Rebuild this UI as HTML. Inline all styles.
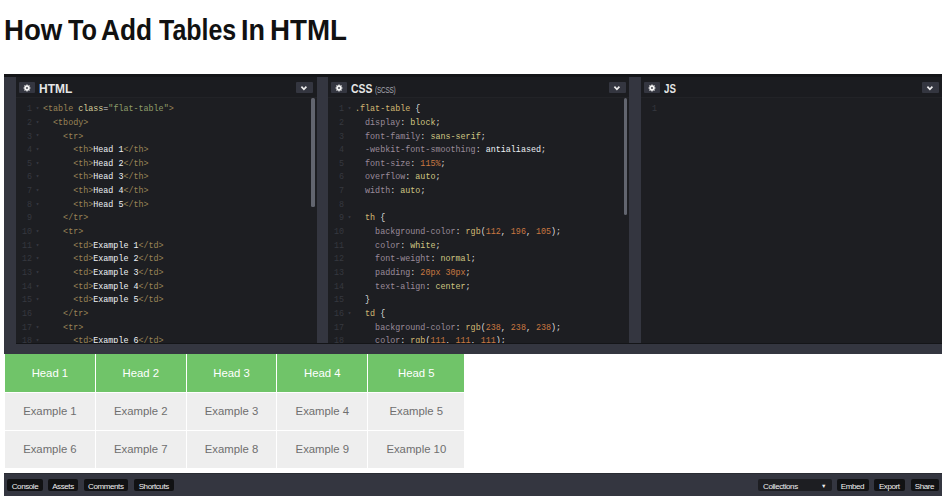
<!DOCTYPE html>
<html><head><meta charset="utf-8">
<style>
*{box-sizing:border-box;margin:0;padding:0}
html,body{width:945px;height:503px;overflow:hidden;background:#fff}
body{position:relative;font-family:"Liberation Sans",sans-serif}
h1{position:absolute;left:0;top:13px;width:400px;height:34px;font-size:29px;font-weight:bold;color:#111;white-space:nowrap;line-height:34px}h1 span{position:absolute;top:0;transform-origin:0 0}
#embed{position:absolute;left:4px;top:74px;width:938px;height:422px;background:#fff}
#topstrip{position:absolute;left:0;top:0;width:938px;height:3px;background:#141518}
.gut{position:absolute;top:3px;height:267px;background:#343640}
.panel{position:absolute;top:3px;height:266px;background:#1d1e22;overflow:hidden}
.ph{position:absolute;left:0;top:0;right:0;height:20.6px;background:#1b1c20;border-bottom:1px solid #222327}
.gear{position:absolute;left:3.4px;top:4.6px;width:15.8px;height:11.6px;background:#343640;border-radius:1px}
.gear svg{position:absolute;left:4.1px;top:2.35px}
.title{position:absolute;left:22.5px;top:5px;color:#e6e6e6;font-weight:bold;font-size:13px;line-height:14px;transform:scaleX(0.92);transform-origin:0 0}
.sub{position:absolute;left:46.8px;top:7.5px;font-size:8.8px;line-height:10px;color:#a8a8b0;letter-spacing:-0.3px;transform:scaleX(0.73);transform-origin:0 0}
.chev{position:absolute;top:4.5px;width:17px;height:11.7px;background:#343640;border-radius:1px}
.chev svg{position:absolute;left:0;top:0}
.code{position:absolute;left:0;top:26.2px;right:0;font-family:"Liberation Mono",monospace;font-size:8.4px;line-height:13.66px;white-space:pre;color:#ddd}
.ln{display:inline-block;width:16px;text-align:right;color:#36383f}
.fd{display:inline-block;width:11px;text-align:center;color:#3a3c45;font-size:6px;position:relative;top:-1.2px}
.t{color:#9a8457}.a{color:#d6cf9a}.s{color:#8f9d6a}.w{color:#eef2f6}
.sel{color:#d2b873}.p{color:#9a8b9a}.k{color:#d0c683}.n{color:#ca7841}
.sb{position:absolute;width:3.2px;background:#62656f;border-radius:1.5px}
#resizer{position:absolute;left:0;top:270px;width:938px;height:10px;background:#343640}
#edgeline{position:absolute;left:12px;top:269px;width:926px;height:1px;background:#141518}
#result{position:absolute;left:0;top:280px;width:938px;height:118px;background:#fff}
table{position:absolute;left:1px;top:0;border-collapse:collapse;font-size:11.33px;font-family:"Liberation Sans",sans-serif}
th,td{border:1px solid #fff;text-align:center;height:38px;padding:0 18.15px;font-weight:normal}
th{background:#70c469;color:#fff}
td{background:#eee;color:#6f6f6f}
tr:first-child th{border-top:none}
th:first-child,td:first-child{border-left:none}
#toolbar{position:absolute;left:0;top:398.6px;width:938px;height:23.2px;background:#343640;border-top:1px solid #2a2c33}
.btn{position:absolute;top:5.9px;height:11.6px;background:#111214;border-radius:2px;color:#f0f0f0;font-size:8px;line-height:15.4px;text-align:center;letter-spacing:-0.4px}
</style></head><body>
<h1><span style="left:4.0px;transform:scaleX(0.953)">How</span><span style="left:67.6px;transform:scaleX(0.875)">To</span><span style="left:101.4px;transform:scaleX(0.907)">Add</span><span style="left:158.6px;transform:scaleX(0.861)">Tables</span><span style="left:241.2px;transform:scaleX(0.930)">In</span><span style="left:270.3px;transform:scaleX(0.956)">HTML</span></h1>
<div id="embed">
 <div id="topstrip"></div>
 <div class="gut" style="left:0;width:12px"></div>
 <div class="panel" style="left:12px;width:301px">
  <div class="ph">
   <div class="gear"><svg width="8" height="8" viewBox="0 0 8 8"><path fill="#f4f4f4" fill-rule="evenodd" d="M6.68 3.40 L7.50 3.43 L7.50 4.57 L6.68 4.60 L6.32 5.47 L6.88 6.08 L6.08 6.88 L5.47 6.32 L4.60 6.68 L4.57 7.50 L3.43 7.50 L3.40 6.68 L2.53 6.32 L1.92 6.88 L1.12 6.08 L1.68 5.47 L1.32 4.60 L0.50 4.57 L0.50 3.43 L1.32 3.40 L1.68 2.53 L1.12 1.92 L1.92 1.12 L2.53 1.68 L3.40 1.32 L3.43 0.50 L4.57 0.50 L4.60 1.32 L5.47 1.68 L6.08 1.12 L6.88 1.92 L6.32 2.53Z M4 3.1 A0.9 0.9 0 1 0 4 4.9 A0.9 0.9 0 1 0 4 3.1Z"/></svg></div>
   <div class="title">HTML</div>
   <div class="chev" style="left:280px"><svg width="17" height="12" viewBox="0 0 17 12"><path d="M5.4 4.7 L7.9 7.3 L10.4 4.7" fill="none" stroke="#eee" stroke-width="1.7"/></svg></div>
  </div>
  <div class="code" id="htmlcode"><span class="ln">1</span><span class="fd">&#9662;</span><span class="t">&lt;table</span> <span class="a">class</span>=<span class="s">"flat-table"</span><span class="t">&gt;</span>
<span class="ln">2</span><span class="fd">&#9662;</span>  <span class="t">&lt;tbody&gt;</span>
<span class="ln">3</span><span class="fd">&#9662;</span>    <span class="t">&lt;tr&gt;</span>
<span class="ln">4</span><span class="fd">&#9662;</span>      <span class="t">&lt;th&gt;</span><span class="w">Head 1</span><span class="t">&lt;/th&gt;</span>
<span class="ln">5</span><span class="fd">&#9662;</span>      <span class="t">&lt;th&gt;</span><span class="w">Head 2</span><span class="t">&lt;/th&gt;</span>
<span class="ln">6</span><span class="fd">&#9662;</span>      <span class="t">&lt;th&gt;</span><span class="w">Head 3</span><span class="t">&lt;/th&gt;</span>
<span class="ln">7</span><span class="fd">&#9662;</span>      <span class="t">&lt;th&gt;</span><span class="w">Head 4</span><span class="t">&lt;/th&gt;</span>
<span class="ln">8</span><span class="fd">&#9662;</span>      <span class="t">&lt;th&gt;</span><span class="w">Head 5</span><span class="t">&lt;/th&gt;</span>
<span class="ln">9</span><span class="fd"></span>    <span class="t">&lt;/tr&gt;</span>
<span class="ln">10</span><span class="fd">&#9662;</span>    <span class="t">&lt;tr&gt;</span>
<span class="ln">11</span><span class="fd">&#9662;</span>      <span class="t">&lt;td&gt;</span><span class="w">Example 1</span><span class="t">&lt;/td&gt;</span>
<span class="ln">12</span><span class="fd">&#9662;</span>      <span class="t">&lt;td&gt;</span><span class="w">Example 2</span><span class="t">&lt;/td&gt;</span>
<span class="ln">13</span><span class="fd">&#9662;</span>      <span class="t">&lt;td&gt;</span><span class="w">Example 3</span><span class="t">&lt;/td&gt;</span>
<span class="ln">14</span><span class="fd">&#9662;</span>      <span class="t">&lt;td&gt;</span><span class="w">Example 4</span><span class="t">&lt;/td&gt;</span>
<span class="ln">15</span><span class="fd">&#9662;</span>      <span class="t">&lt;td&gt;</span><span class="w">Example 5</span><span class="t">&lt;/td&gt;</span>
<span class="ln">16</span><span class="fd"></span>    <span class="t">&lt;/tr&gt;</span>
<span class="ln">17</span><span class="fd">&#9662;</span>    <span class="t">&lt;tr&gt;</span>
<span class="ln">18</span><span class="fd">&#9662;</span>      <span class="t">&lt;td&gt;</span><span class="w">Example 6</span><span class="t">&lt;/td&gt;</span></div>
  <div class="sb" style="left:295.4px;top:21.4px;height:108.6px"></div>
 </div>
 <div class="gut" style="left:313px;width:11px"></div>
 <div class="panel" style="left:324px;width:301px">
  <div class="ph">
   <div class="gear"><svg width="8" height="8" viewBox="0 0 8 8"><path fill="#f4f4f4" fill-rule="evenodd" d="M6.68 3.40 L7.50 3.43 L7.50 4.57 L6.68 4.60 L6.32 5.47 L6.88 6.08 L6.08 6.88 L5.47 6.32 L4.60 6.68 L4.57 7.50 L3.43 7.50 L3.40 6.68 L2.53 6.32 L1.92 6.88 L1.12 6.08 L1.68 5.47 L1.32 4.60 L0.50 4.57 L0.50 3.43 L1.32 3.40 L1.68 2.53 L1.12 1.92 L1.92 1.12 L2.53 1.68 L3.40 1.32 L3.43 0.50 L4.57 0.50 L4.60 1.32 L5.47 1.68 L6.08 1.12 L6.88 1.92 L6.32 2.53Z M4 3.1 A0.9 0.9 0 1 0 4 4.9 A0.9 0.9 0 1 0 4 3.1Z"/></svg></div>
   <div class="title" style="transform:scaleX(0.80)">CSS</div><div class="sub">(SCSS)</div>
   <div class="chev" style="left:281px"><svg width="17" height="12" viewBox="0 0 17 12"><path d="M5.4 4.7 L7.9 7.3 L10.4 4.7" fill="none" stroke="#eee" stroke-width="1.7"/></svg></div>
  </div>
  <div class="code" id="csscode"><span class="ln">1</span><span class="fd">&#9662;</span><span class="sel">.flat-table</span> {
<span class="ln">2</span><span class="fd"></span>  <span class="p">display</span>: <span class="k">block</span>;
<span class="ln">3</span><span class="fd"></span>  <span class="p">font-family</span>: <span class="k">sans-serif</span>;
<span class="ln">4</span><span class="fd"></span>  <span class="p">-webkit-font-smoothing</span>: <span class="w">antialiased</span>;
<span class="ln">5</span><span class="fd"></span>  <span class="p">font-size</span>: <span class="n">115%</span>;
<span class="ln">6</span><span class="fd"></span>  <span class="p">overflow</span>: <span class="k">auto</span>;
<span class="ln">7</span><span class="fd"></span>  <span class="p">width</span>: <span class="k">auto</span>;
<span class="ln">8</span><span class="fd"></span>
<span class="ln">9</span><span class="fd">&#9662;</span>  <span class="sel">th</span> {
<span class="ln">10</span><span class="fd"></span>    <span class="p">background-color</span>: <span class="sel">rgb</span>(<span class="n">112</span>, <span class="n">196</span>, <span class="n">105</span>);
<span class="ln">11</span><span class="fd"></span>    <span class="p">color</span>: <span class="k">white</span>;
<span class="ln">12</span><span class="fd"></span>    <span class="p">font-weight</span>: <span class="k">normal</span>;
<span class="ln">13</span><span class="fd"></span>    <span class="p">padding</span>: <span class="n">20px</span> <span class="n">30px</span>;
<span class="ln">14</span><span class="fd"></span>    <span class="p">text-align</span>: <span class="k">center</span>;
<span class="ln">15</span><span class="fd"></span>  }
<span class="ln">16</span><span class="fd">&#9662;</span>  <span class="sel">td</span> {
<span class="ln">17</span><span class="fd"></span>    <span class="p">background-color</span>: <span class="sel">rgb</span>(<span class="n">238</span>, <span class="n">238</span>, <span class="n">238</span>);
<span class="ln">18</span><span class="fd"></span>    <span class="p">color</span>: <span class="sel">rgb</span>(<span class="n">111</span>, <span class="n">111</span>, <span class="n">111</span>);</div>
  <div class="sb" style="left:295.8px;top:21.4px;height:117px"></div>
 </div>
 <div class="gut" style="left:625px;width:12px"></div>
 <div class="panel" style="left:637px;width:301px">
  <div class="ph">
   <div class="gear"><svg width="8" height="8" viewBox="0 0 8 8"><path fill="#f4f4f4" fill-rule="evenodd" d="M6.68 3.40 L7.50 3.43 L7.50 4.57 L6.68 4.60 L6.32 5.47 L6.88 6.08 L6.08 6.88 L5.47 6.32 L4.60 6.68 L4.57 7.50 L3.43 7.50 L3.40 6.68 L2.53 6.32 L1.92 6.88 L1.12 6.08 L1.68 5.47 L1.32 4.60 L0.50 4.57 L0.50 3.43 L1.32 3.40 L1.68 2.53 L1.12 1.92 L1.92 1.12 L2.53 1.68 L3.40 1.32 L3.43 0.50 L4.57 0.50 L4.60 1.32 L5.47 1.68 L6.08 1.12 L6.88 1.92 L6.32 2.53Z M4 3.1 A0.9 0.9 0 1 0 4 4.9 A0.9 0.9 0 1 0 4 3.1Z"/></svg></div>
   <div class="title" style="transform:scaleX(0.75)">JS</div>
   <div class="chev" style="left:280.6px"><svg width="17" height="12" viewBox="0 0 17 12"><path d="M5.4 4.7 L7.9 7.3 L10.4 4.7" fill="none" stroke="#eee" stroke-width="1.7"/></svg></div>
  </div>
  <div class="code"><span class="ln">1</span></div>
 </div>
 <div id="edgeline"></div>
 <div id="resizer"></div>
 <div id="result">
  <table>
   <tr><th>Head 1</th><th>Head 2</th><th>Head 3</th><th>Head 4</th><th>Head 5</th></tr>
   <tr><td>Example 1</td><td>Example 2</td><td>Example 3</td><td>Example 4</td><td>Example 5</td></tr>
   <tr><td>Example 6</td><td>Example 7</td><td>Example 8</td><td>Example 9</td><td>Example 10</td></tr>
  </table>
 </div>
 <div id="toolbar">
  <div class="btn" style="left:3px;width:36px">Console</div>
  <div class="btn" style="left:44px;width:30px">Assets</div>
  <div class="btn" style="left:79.5px;width:44.5px">Comments</div>
  <div class="btn" style="left:129.5px;width:40.5px">Shortcuts</div>
  <div class="btn" style="left:754px;width:74px;background:#1d1e22;text-align:left;padding-left:5px">Collections<span style="position:absolute;left:63px;top:-0.4px;font-size:5.5px">&#9660;</span></div>
  <div class="btn" style="left:832.5px;width:32px">Embed</div>
  <div class="btn" style="left:869.5px;width:31.5px">Export</div>
  <div class="btn" style="left:906.5px;width:28px">Share</div>
 </div>
</div>
</body></html>
